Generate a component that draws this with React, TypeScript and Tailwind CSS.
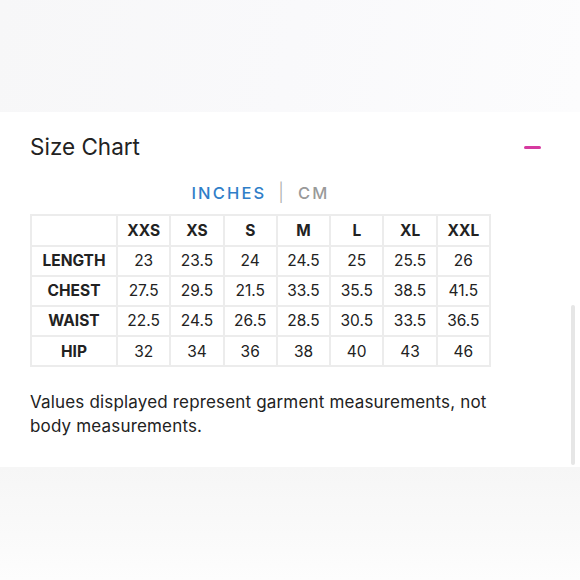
import React from "react";

const sizes = ["XXS", "XS", "S", "M", "L", "XL", "XXL"];
const rows: [string, string[]][] = [
  ["LENGTH", ["23", "23.5", "24", "24.5", "25", "25.5", "26"]],
  ["CHEST", ["27.5", "29.5", "21.5", "33.5", "35.5", "38.5", "41.5"]],
  ["WAIST", ["22.5", "24.5", "26.5", "28.5", "30.5", "33.5", "36.5"]],
  ["HIP", ["32", "34", "36", "38", "40", "43", "46"]],
];

export default function App() {
  return (
    <div
      className="w-[580px] h-[580px] relative overflow-hidden bg-white text-[#222]"
      style={{ fontFamily: "Inter, 'Open Sans', sans-serif" }}
    >
      <div className="h-[112px] bg-[linear-gradient(100deg,#f7f7f8_0%,#f9f9fb_50%,#fcfcfd_100%)]" />
      <div className="h-[355px] bg-white px-[30px] pt-[21px]">
        <div className="flex items-center justify-between">
          <div className="text-[22.5px] leading-[28px] text-[#222]">Size Chart</div>
          <div className="w-[17px] h-[3px] bg-[#d63aa0] mr-[9px] rounded-sm" />
        </div>
        <div className="mt-[22px] flex items-center justify-center w-[461px] text-[16.5px] leading-[20px] tracking-[0.13em]">
          <span className="text-[#2f7ec8] font-medium">INCHES</span>
          <span className="ml-[12px] mr-[12px] text-[#aaa] font-light text-[18px]">|</span>
          <span className="text-[#999] font-medium">CM</span>
        </div>
        <table className="mt-[11px] border-collapse text-[15.5px] w-[461px] table-fixed">
          <colgroup>
            <col className="w-[86px]" />
            {sizes.map((s) => (
              <col key={s} />
            ))}
          </colgroup>
          <thead>
            <tr className="h-[30.5px]">
              <th className="border-2 border-[#ececec]" />
              {sizes.map((s) => (
                <th key={s} className="border-2 border-[#ececec] font-bold text-center">
                  {s}
                </th>
              ))}
            </tr>
          </thead>
          <tbody>
            {rows.map(([label, vals]) => (
              <tr key={label} className="h-[30.2px]">
                <td className="border-2 border-[#ececec] font-bold text-center">{label}</td>
                {vals.map((v, i) => (
                  <td key={i} className="border-2 border-[#ececec] text-center">
                    {v}
                  </td>
                ))}
              </tr>
            ))}
          </tbody>
        </table>
        <p className="mt-[23px] text-[17px] leading-[24px] tracking-[0.01em] w-[465px] text-[#222]">
          Values displayed represent garment measurements, not body measurements.
        </p>
      </div>
      <div className="h-[113px] bg-[linear-gradient(180deg,#f6f6f6_0%,#fafafa_60%,#fdfdfd_100%)]" />
      <div className="absolute left-[571px] top-[305px] w-[4px] h-[160px] bg-[#e6e6e6] rounded-full" />
    </div>
  );
}
